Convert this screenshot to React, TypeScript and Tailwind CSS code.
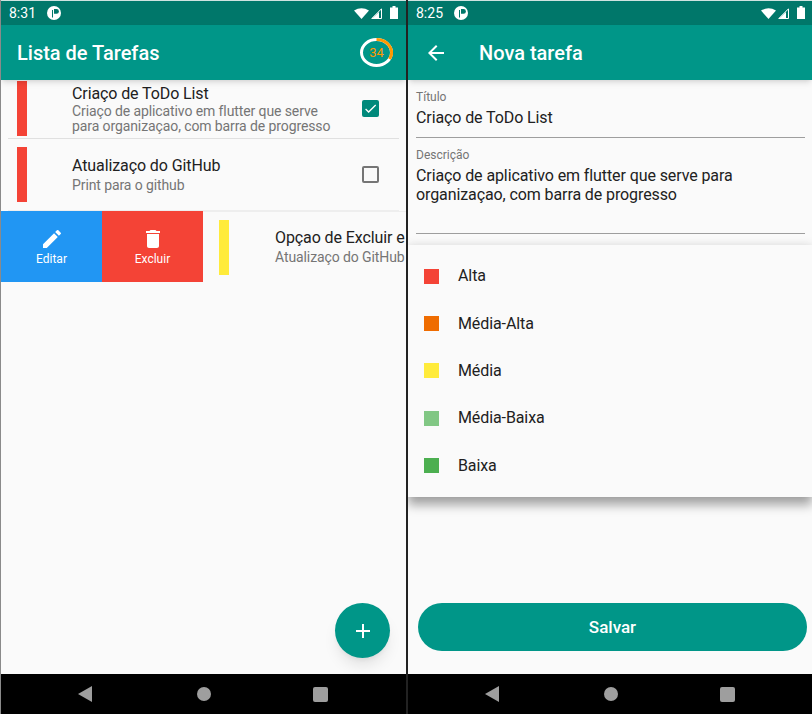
import React from "react";
import { MdAdd, MdArrowBack, MdCheck, MdDelete, MdEdit } from "react-icons/md";

function StatusBar({ time, padding }: { time: string; padding: string }) {
  return (
    <div className={`h-[25px] shrink-0 bg-[#00776a] border-t border-[#cfe3e0] flex items-center pl-[8px] text-white text-sm ${padding}`}>
      <span className="w-[28px]">{time}</span>
      <svg width="14" height="14" viewBox="0 0 14 14" className="ml-[10px]">
        <circle cx="7" cy="7" r="7" fill="#fff" />
        <path d="M7 3h2.5a2.4 2.4 0 0 1 0 4.8H7z" fill="#00776a" />
        <path d="M5 4h1v7.5h-1z" fill="#00776a" />
      </svg>
      <div className="ml-auto flex items-center">
        <svg width="15" height="11" viewBox="0 0 15 11">
          <path d="M0 2.5 Q7.5 -2 15 2.5 L7.5 11z" fill="#fff" />
        </svg>
        <svg width="11" height="11" viewBox="0 0 11 11" className="ml-[2px]">
          <path d="M10.5 0.8V10.5H0.8z" fill="none" stroke="#fff" strokeWidth="1" />
          <path d="M8 4V11H0.5z" fill="#fff" />
        </svg>
        <svg width="8" height="13" viewBox="0 0 8 13" className="ml-[8px] -mt-[2px]">
          <path d="M2.5 0h3v1.5H8V13H0V1.5h2.5z" fill="#fff" />
        </svg>
      </div>
    </div>
  );
}

function NavBar({ offset }: { offset: string }) {
  return (
    <div className={`h-10 shrink-0 bg-black flex items-center ${offset}`}>
      <svg width="14" height="16" viewBox="0 0 14 16">
        <path d="M14 0V16L0 8z" fill="#9e9e9e" />
      </svg>
      <div className="size-[14px] ml-[105px] rounded-full bg-[#9e9e9e]" />
      <div className="size-[15px] ml-[102px] rounded-[2px] bg-[#9e9e9e]" />
    </div>
  );
}

function ProgressRing() {
  return (
    <div className="relative w-[33px] h-[29px] flex items-center justify-center">
      <svg width="33" height="29" viewBox="0 0 33 29" className="absolute inset-0">
        <ellipse cx="16.5" cy="14.5" rx="15" ry="13" fill="none" stroke="#fff" strokeWidth="3" />
        <path d="M16.5 1.5 A15 13 0 0 1 29.5 21" fill="none" stroke="#ff9800" strokeWidth="3" />
      </svg>
      <span className="text-[13px] text-[#ff9800]">34</span>
    </div>
  );
}

function TaskText({ title, sub }: { title: string; sub: string }) {
  return (
    <div className="min-w-0 flex-1 flex flex-col gap-px">
      <div className="text-base leading-[20px] tracking-[-0.1px] text-[#212121] whitespace-nowrap">{title}</div>
      <div className="text-sm leading-[17px] tracking-[-0.1px] text-[#757575] whitespace-nowrap">{sub}</div>
    </div>
  );
}

function SwipeAction({ color, label, icon }: { color: string; label: string; icon: React.ReactNode }) {
  return (
    <div className={`w-[101px] shrink-0 flex flex-col items-center justify-center text-white ${color}`}>
      {icon}
      <span className="text-xs leading-[14px] mt-px">{label}</span>
    </div>
  );
}

const priorities = [
  { label: "Alta", color: "bg-[#f44336]" },
  { label: "Média-Alta", color: "bg-[#ef6c00]" },
  { label: "Média", color: "bg-[#ffeb3b]" },
  { label: "Média-Baixa", color: "bg-[#81c784]" },
  { label: "Baixa", color: "bg-[#4caf50]" },
];

function ListScreen() {
  return (
    <div className="w-[406px] shrink-0 border-l border-[#8a8a8a] flex flex-col overflow-hidden">
      <StatusBar time="8:31" padding="pr-[8px]" />
      <div className="h-[55px] shrink-0 bg-[#009688] flex items-center justify-between pl-[16px] pr-[13px] shadow-md z-10">
        <span className="text-xl font-medium text-white">Lista de Tarefas</span>
        <ProgressRing />
      </div>

      <div className="relative flex-1 bg-[#fafafa]">
        <div className="mx-[7px] h-[59px] border-b border-[#e0e0e0] flex">
          <div className="w-[10px] h-[55px] ml-[9px] mt-px bg-[#f44336]" />
          <div className="ml-[45px] pt-[4px] flex-1 min-w-0">
            <div className="text-base leading-[20px] tracking-[-0.1px] text-[#212121] whitespace-nowrap">Criaço de ToDo List</div>
            <div className="text-sm leading-[15px] tracking-[-0.1px] text-[#757575] whitespace-nowrap">
              Criaço de aplicativo em flutter que serve
              <br />
              para organizaçao, com barra de progresso
            </div>
          </div>
          <div className="size-[17px] mt-[20px] mr-[20px] rounded-[2px] bg-[#00897b] flex items-center justify-center">
            <MdCheck size={15} className="text-white" />
          </div>
        </div>

        <div className="h-[72px] mx-[7px] border-b border-[#eeeeee] flex items-center">
          <div className="w-[10px] h-[55px] ml-[9px] bg-[#f44336]" />
          <div className="ml-[45px] flex-1 min-w-0">
            <TaskText title="Atualizaço do GitHub" sub="Print para o github" />
          </div>
          <div className="size-[17px] mr-[20px] rounded-[2px] border-2 border-[#757575]" />
        </div>

        <div className="h-[71px] flex">
          <SwipeAction color="bg-[#2196f3]" label="Editar" icon={<MdEdit size={24} />} />
          <SwipeAction color="bg-[#f44336]" label="Excluir" icon={<MdDelete size={24} />} />
          <div className="flex-1 min-w-0 border-t border-[#eeeeee] flex items-center overflow-hidden">
            <div className="w-[10px] h-[55px] ml-[16px] shrink-0 bg-[#ffeb3b]" />
            <div className="ml-[46px] flex-1 min-w-0">
              <TaskText title="Opçao de Excluir e Editar" sub="Atualizaço do GitHub" />
            </div>
          </div>
        </div>

        <button className="absolute right-[16px] bottom-[16px] size-[55px] rounded-full bg-[#009688] text-white flex items-center justify-center shadow-lg">
          <MdAdd size={24} />
        </button>
      </div>
      <NavBar offset="pl-[77px]" />
    </div>
  );
}

function FormScreen() {
  return (
    <div className="flex-1 ml-[2px] flex flex-col overflow-hidden">
      <StatusBar time="8:25" padding="pr-[7px]" />
      <div className="h-[55px] shrink-0 bg-[#009688] flex items-center pl-[16px] shadow-md z-10 text-white">
        <MdArrowBack size={24} />
        <span className="ml-[31px] text-xl font-medium">Nova tarefa</span>
      </div>

      <div className="relative flex-1 bg-[#fafafa] flex flex-col pl-[8px] pr-[7px] pt-[10px]">
        <label className="text-xs leading-[14px] text-[#757575]">Título</label>
        <div className="text-base leading-[20px] tracking-[-0.1px] mt-[3px] text-[#212121] h-[31px] pt-[1px] border-b border-[#9e9e9e]">Criaço de ToDo List</div>

        <label className="text-xs leading-[14px] text-[#757575] mt-[10px]">Descrição</label>
        <div className="text-base leading-[19px] tracking-[-0.1px] mt-[4px] text-[#212121] h-[68px] border-b border-[#9e9e9e]">
          Criaço de aplicativo em flutter que serve para organizaçao, com barra de progresso
        </div>

        <button className="mt-auto mb-[23px] ml-[2px] -mr-[2px] h-[48px] pt-[2px] rounded-[24px] bg-[#009688] text-white text-[17px] font-medium">Salvar</button>

        <div className="absolute left-0 right-0 top-[165px] h-[252px] bg-[#fafafa] shadow-[0_8px_10px_rgba(0,0,0,0.35),0_-2px_8px_rgba(0,0,0,0.08)] flex flex-col justify-center">
          {priorities.map((p) => (
            <div key={p.label} className="h-[47.4px] flex items-center pl-[16px]">
              <div className={`size-[15px] ${p.color}`} />
              <span className="ml-[19px] text-base tracking-[-0.1px] text-[#212121]">{p.label}</span>
            </div>
          ))}
        </div>
      </div>
      <NavBar offset="pl-[77px]" />
    </div>
  );
}

export default function App() {
  return (
    <div className="w-[812px] h-[714px] flex bg-[#222222] overflow-hidden font-['Roboto',sans-serif]">
      <ListScreen />
      <FormScreen />
    </div>
  );
}
